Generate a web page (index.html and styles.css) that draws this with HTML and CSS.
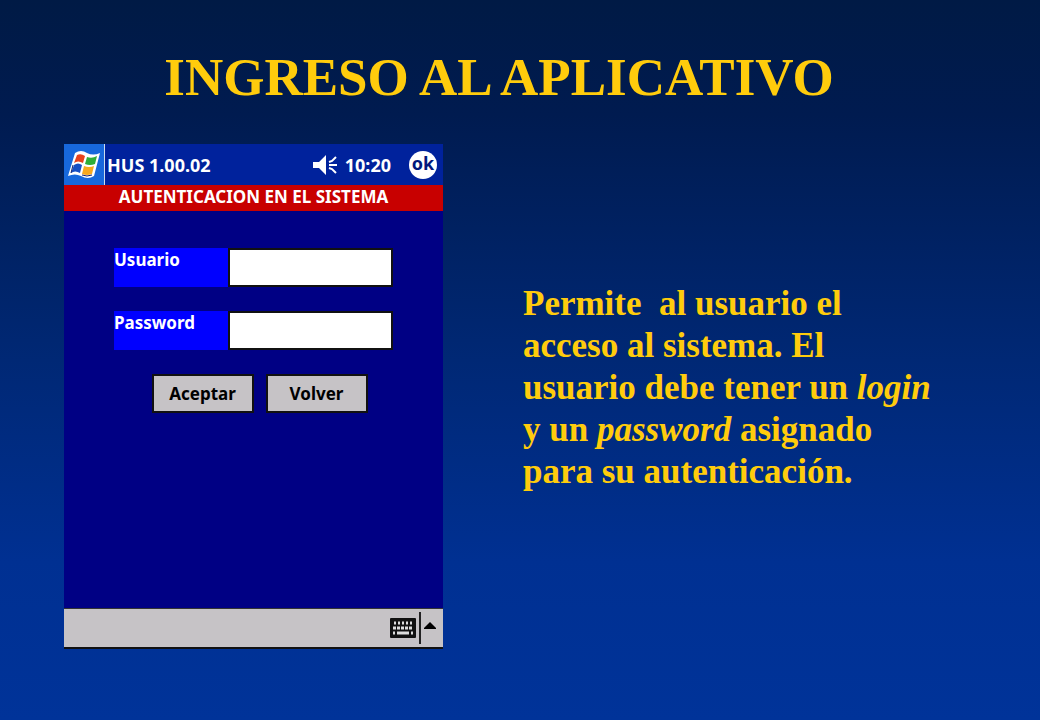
FILE: index.html
```html
<!DOCTYPE html>
<html lang="es">
<head>
  <meta charset="UTF-8" />
  <meta name="viewport" content="width=device-width, initial-scale=1" />
  <title>Ingreso al aplicativo</title>
  <link rel="stylesheet" href="styles.css">
</head>
<body>
  <h1>INGRESO AL APLICATIVO</h1>

  <main class="content">
    <section class="device">
      <header class="top-bar">
        <button class="start" type="button" aria-label="Inicio">
          <svg width="34" height="32" viewBox="0 0 34 32">
            <path d="M8 4Q14 0 20 4Q26 7 33 4L27 27Q21 31 14 27Q8 24 1 27Z" fill="#fff"/>
            <path d="M10 6Q14 4 18 7L16 14Q11 11 7 14Z" fill="#e8421c"/>
            <path d="M20 8Q25 10 30 7L28 15Q23 17 18 15Z" fill="#2fae38"/>
            <path d="M7 16Q11 13 15 16L13 24Q8 21 4 24Z" fill="#174fc4"/>
            <path d="M17 17Q22 19 27 17L25 25Q20 27 15 25Z" fill="#f7a91e"/>
            <path d="M6 16L4 24M15 26Q20 28 25 26" fill="none" stroke="#12206c"/>
          </svg>
        </button>
        <span class="app-name">HUS 1.00.02</span>
        <svg class="speaker" width="26" height="22" viewBox="0 0 26 22">
          <path d="M0 8H6L13 1V21L6 14H0Z" fill="#fff"/>
          <path d="M16 8L19 7L23 3M16 11H24M16 14L19 15L23 19" fill="none" stroke="#fff" stroke-width="2"/>
        </svg>
        <span class="clock">10:20</span>
        <button class="ok" type="button">ok</button>
      </header>

      <h2>AUTENTICACION EN EL SISTEMA</h2>

      <form class="login">
        <div class="field">
          <label for="usuario">Usuario</label>
          <input id="usuario" type="text">
        </div>
        <div class="field">
          <label for="password">Password</label>
          <input id="password" type="password">
        </div>
        <div class="actions">
          <button type="button">Aceptar</button>
          <button type="button">Volver</button>
        </div>
      </form>

      <footer class="bottom-bar">
        <button type="button" aria-label="Teclado">
          <svg width="26" height="20" viewBox="0 0 26 20">
            <rect width="26" height="20" rx="1" fill="#111"/>
            <path d="M4 5H22" stroke="#ddd" stroke-width="3" stroke-dasharray="2 2"/>
            <path d="M3 10H23" stroke="#ddd" stroke-width="3" stroke-dasharray="3 1"/>
            <path d="M3 15H5M7 15H19M21 15H23" stroke="#ddd" stroke-width="3"/>
          </svg>
        </button>
        <button class="more" type="button" aria-label="Opciones">
          <svg width="12" height="12" viewBox="0 0 12 12"><path d="M6 0L12 6V7H0V6Z" fill="#000"/></svg>
        </button>
      </footer>
    </section>

    <p class="description">Permite&nbsp; al usuario el acceso al sistema. El usuario debe tener un <em>login</em> y un <em>password</em> asignado para su autenticación.</p>
  </main>
</body>
</html>
```
FILE: styles.css
```css
* { box-sizing: border-box; }

body {
  margin: 0;
  min-height: 100vh;
  padding: 44px 64px;
  background: linear-gradient(#001a45 0%, #001b50 16%, #002875 50%, #003092 78%, #003399 100%);
  color: #ffcc0c;
  font-family: "Liberation Serif", "Times New Roman", serif;
  font-weight: bold;
}

h1 {
  margin: 0 42px 34px 0;
  font-size: 53px;
  line-height: 66px;
  text-align: center;
}

.content {
  display: flex;
  align-items: center;
  gap: 80px;
}

.device {
  flex: 0 1 379px;
  min-width: 0;
  display: flex;
  flex-direction: column;
  background: #000084;
  color: #fff;
  font-family: "Noto Sans", Tahoma, sans-serif;
  font-size: 17px;
}

.device button {
  font: inherit;
  cursor: pointer;
}

.top-bar {
  display: flex;
  align-items: center;
  height: 41px;
  padding-right: 6px;
  background: #00229c;
  font-size: 18px;
  line-height: 24px;
}

.start {
  display: flex;
  align-items: center;
  justify-content: center;
  width: 41px;
  height: 41px;
  padding: 0;
  border: none;
  border-right: 1px solid #cde;
  background: #1768dc;
}

.app-name {
  flex: 1;
  padding-left: 2px;
}

.clock {
  margin: 0 18px 0 6px;
}

.top-bar .ok {
  width: 28px;
  height: 28px;
  padding: 0 0 4px;
  border: none;
  border-radius: 50%;
  background: #fff;
  color: #00187c;
  line-height: 24px;
}

h2 {
  margin: 0;
  padding-bottom: 2px;
  background: #c80000;
  font-size: 17px;
  line-height: 24px;
  text-align: center;
}

.login {
  display: flex;
  flex-direction: column;
  gap: 24px;
  padding: 37px 50px 195px;
}

.field { display: flex; }

.field label {
  flex: 0 0 114px;
  height: 39px;
  background: #0000ff;
  line-height: 24px;
}

.field input {
  flex: 1;
  min-width: 0;
  height: 39px;
  padding: 4px 6px;
  border: 2px solid #111;
  border-radius: 0;
  background: #fff;
  font: inherit;
}

.actions {
  display: flex;
  justify-content: center;
  gap: 12px;
  padding-left: 12px;
}

.actions button {
  width: 102px;
  height: 39px;
  padding: 0;
  border: 2px solid #111;
  background: #c6c3c6;
  color: #000;
}

.bottom-bar {
  display: flex;
  align-items: center;
  justify-content: flex-end;
  gap: 3px;
  height: 41px;
  padding-right: 7px;
  border-top: 1px solid #333;
  border-bottom: 2px solid #111;
  background: #c6c3c6;
}

.bottom-bar button {
  display: flex;
  align-items: center;
  height: 32px;
  padding: 0;
  border: none;
  background: none;
}

.bottom-bar .more {
  padding-left: 3px;
  border-left: 2px solid #222;
}

.description {
  flex: 1;
  max-width: 420px;
  margin: 0;
  padding-bottom: 18px;
  font-size: 35px;
  line-height: 42px;
}
```
